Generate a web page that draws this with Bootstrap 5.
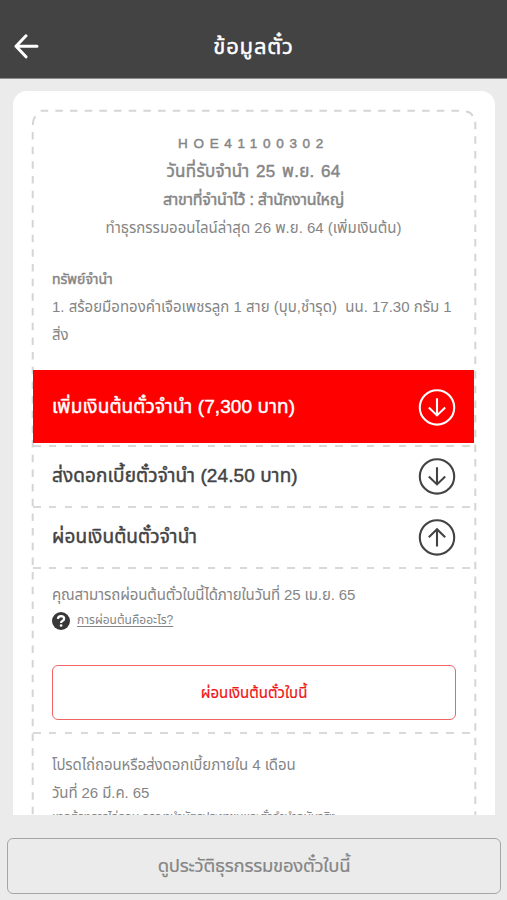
<!DOCTYPE html>
<html lang="th">
<head>
<meta charset="utf-8">
<meta name="viewport" content="width=device-width, initial-scale=1">
<title>ข้อมูลตั๋ว</title>
<link rel="stylesheet" href="https://cdn.jsdelivr.net/npm/bootstrap@5.3.0/dist/css/bootstrap.min.css">
<style>
body{height:900px;background:#ebebeb;color:#858585;font-family:"Liberation Sans","Noto Sans Thai","Noto Sans",sans-serif;font-size:15px;line-height:28px;-webkit-font-smoothing:antialiased}
.topbar{height:79px;background:#434343;border-bottom:1px solid #8d8d8d;padding:15px 13px 0;color:#fff}
.topbar svg{flex:0 0 27px}
.topbar .gap-end{width:27px}
.topbar h1{font-size:22px;line-height:32px;font-weight:400;letter-spacing:.8px}
.medium{-webkit-text-stroke:.45px currentColor}
.ticket{height:724px;margin:12px 12px 0 13px;border-radius:14px 14px 0 0}
.outline{left:0;top:0;pointer-events:none}
.inner{margin:0 21px 0 20px}
.summary{padding-top:39px;height:279px}
.px19{padding:0 18px 0 19px}
.t{display:block;white-space:pre}
.code{font-size:13.500px;line-height:27px;letter-spacing:5.700px}
.received{font-size:17px;line-height:29px;letter-spacing:.3px;word-spacing:1.500px}
.branch{font-size:16px;letter-spacing:-.25px}
.asset{font-size:14px;padding-top:23px}
.rowline{background:repeating-linear-gradient(90deg,#d9d9d9 0 7.5px,transparent 7.5px 15.9px) 0 0/100% 2px no-repeat}
.r{height:61px;font-size:19px;letter-spacing:.1px;color:#434343}
.r.on{height:73px;margin-bottom:2px;background:#f00;color:#fff}
.detail{height:165px;padding-top:14px}
.detail .t{letter-spacing:-.13px}
.help{gap:7px;font-size:12px;line-height:22px}
.help a{color:#858585;text-underline-offset:2px}
.help svg{margin-top:2px}
.pay{height:55px;margin:34px 0 0;border:1.3px solid #ef6464;border-radius:6px;color:#f01414;-webkit-text-stroke:.2px currentColor}
.due{padding-top:19px}
.due .t{letter-spacing:-.08px}
.due .note{font-size:12.500px;line-height:20px;letter-spacing:-.5px}
.hist{height:56px;margin:23px 6px 0 7px;border:1px solid #a5a5a5;border-radius:6px;font-size:18.500px;letter-spacing:-.25px;-webkit-text-stroke:.2px currentColor}
</style>
<script src="https://cdn.jsdelivr.net/npm/bootstrap@5.3.0/dist/js/bootstrap.bundle.min.js"></script>
</head>
<body class="overflow-hidden">
<svg width="0" height="0" class="position-absolute" aria-hidden="true">
<symbol id="down" viewBox="0 0 38 38"><g fill="none" stroke="currentColor" stroke-width="2.1"><circle cx="19" cy="19.400" r="17.2"/><path d="M19 10.200v17.500M10.800 19.400l8.200 8 8.200-8"/></g></symbol>
<symbol id="up" viewBox="0 0 38 38"><g fill="none" stroke="currentColor" stroke-width="2.1"><circle cx="19" cy="19.400" r="17.2"/><path d="M19 28.400V10.900M10.800 19.200l8.200-8 8.200 8"/></g></symbol>
</svg>
<header class="topbar d-flex align-items-center">
<svg width="27" height="26" viewBox="0 0 27 26" fill="none" stroke="#fff" stroke-width="3" stroke-linecap="round" stroke-linejoin="round"><path d="M24 12.300H3M13 1.800L3 12.300l10 10.500"/></svg>
<h1 class="m-0 flex-grow-1 text-center medium">ข้อมูลตั๋ว</h1>
<span class="gap-end"></span>
</header>
<main class="ticket bg-white position-relative overflow-hidden">
<svg class="outline position-absolute" width="482" height="724" fill="none" stroke="#d5d5d5" stroke-width="2"><path d="M27.700 19.700H449" stroke-dasharray="7.500 7.170"/><path d="M22.500 25.500Q20 28 19.800 34M453 20.500Q458 21 459.500 25"/><path d="M19.700 41V724" stroke-dasharray="7.500 7.170"/><path d="M462.300 30.700V724" stroke-dasharray="7.500 7.170"/></svg>
<div class="inner position-relative">
<section class="summary text-center">
<div class="t medium code">HOE41100302</div>
<div class="t medium received">วันที่รับจำนำ 25 พ.ย. 64</div>
<div class="t medium branch">สาขาที่จำนำไว้ : สำนักงานใหญ่</div>
<div class="t">ทำธุรกรรมออนไลน์ล่าสุด 26 พ.ย. 64 (เพิ่มเงินต้น)</div>
<div class="text-start px19"><div class="t medium asset">ทรัพย์จำนำ</div>
<div class="t">1. สร้อยมือทองคำเจือเพชรลูก 1 สาย (บุบ,ชำรุด)  นน. 17.30 กรัม 1</div><div class="t">สิ่ง</div></div>
</section>
<div class="r on px19 d-flex justify-content-between align-items-center medium"><span>เพิ่มเงินต้นตั๋วจำนำ (7,300 บาท)</span><svg width="38" height="38"><use href="#down"/></svg></div>
<div class="r rowline px19 d-flex justify-content-between align-items-center medium"><span>ส่งดอกเบี้ยตั๋วจำนำ (24.50 บาท)</span><svg width="38" height="38"><use href="#down"/></svg></div>
<div class="r rowline px19 d-flex justify-content-between align-items-center medium"><span>ผ่อนเงินต้นตั๋วจำนำ</span><svg width="38" height="38"><use href="#up"/></svg></div>
<section class="rowline px19 detail"><div class="t">คุณสามารถผ่อนต้นตั๋วใบนี้ได้ภายในวันที่ 25 เม.ย. 65</div>
<div class="help d-flex align-items-center"><svg width="18" height="18" viewBox="0 0 18 18"><circle cx="9" cy="9" r="9" fill="#383838"/><path d="M5.900 6.900Q6.100 4.300 9 4.200Q12.100 4.300 12.100 6.700Q12.100 8.200 10.300 9Q9.100 9.600 9.100 10.900" fill="none" stroke="#fff" stroke-width="2.300"/><circle cx="9.100" cy="13.500" r="1.350" fill="#fff"/></svg><a href="#">การผ่อนต้นคืออะไร?</a></div>
<div class="pay d-flex align-items-center justify-content-center">ผ่อนเงินต้นตั๋วใบนี้</div></section>
<section class="rowline px19 due"><div class="t">โปรดไถ่ถอนหรือส่งดอกเบี้ยภายใน 4 เดือน</div><div class="t">วันที่ 26 มี.ค. 65</div><div class="t note">หากต้องการไถ่ถอน กรุณานำบัตรประชาชนและตั๋วจำนำฉบับจริง</div></section>
</div>
</main>
<footer class="hist d-flex align-items-center justify-content-center">ดูประวัติธุรกรรมของตั๋วใบนี้</footer>
</body>
</html>
